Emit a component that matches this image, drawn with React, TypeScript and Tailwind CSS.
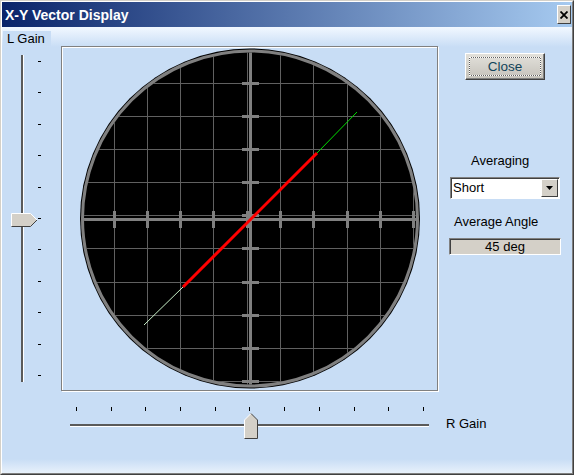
import React from "react";

function Scope() {
  const xs = [19, 52, 85, 118, 151, 185, 218, 251, 285, 318, 351];
  const ys = [2, 36, 69, 102, 135, 168, 201, 235, 268, 301, 334];
  const cx = 188;
  const cy = 171.5;
  return (
    <svg width="375" height="343" viewBox="0 0 375 343" className="block">
      <defs>
        <clipPath id="scopeClip">
          <circle cx={cx} cy={cy} r={166} />
        </clipPath>
      </defs>
      <circle cx={cx} cy={cy} r={170} fill="#000" />
      <g clipPath="url(#scopeClip)" shapeRendering="crispEdges">
        {xs.map((x) => (
          <line key={"gx" + x} x1={x + 0.5} y1={0} x2={x + 0.5} y2={343} stroke="#606060" strokeWidth={1} />
        ))}
        {ys.map((y) => (
          <line key={"gy" + y} x1={0} y1={y + 0.5} x2={375} y2={y + 0.5} stroke="#606060" strokeWidth={1} />
        ))}
        <rect x={187} y={0} width={3} height={343} fill="#808080" />
        <rect x={0} y={171} width={375} height={3} fill="#808080" />
        {ys.map((y) => (
          <rect key={"ty" + y} x={180} y={y - 1} width={17} height={3} fill="#808080" />
        ))}
        {xs.map((x) => (
          <rect key={"tx" + x} x={x - 1} y={164} width={3} height={17} fill="#808080" />
        ))}
      </g>
      <circle cx={cx} cy={cy} r={167.5} fill="none" stroke="#808080" strokeWidth={3} />
      <line x1={82} y1={278} x2={121} y2={240} stroke="#c8f0c8" strokeWidth={1} />
      <line x1={121} y1={240} x2={255} y2={106} stroke="#ff0000" strokeWidth={3} />
      <line x1={255} y1={106} x2={295} y2={65} stroke="#00e000" strokeWidth={1} />
    </svg>
  );
}

function VThumb() {
  return (
    <svg width="27" height="14" viewBox="0 0 27 14" className="block">
      <polygon points="0.5,0.5 19.5,0.5 26,7 19.5,13.5 0.5,13.5" fill="#d4d0c8" />
      <polyline points="0.5,13.5 0.5,0.5 19.5,0.5 26,7" fill="none" stroke="#ffffff" strokeWidth={1} />
      <polyline points="26,7 19.5,13.5 0.5,13.5" fill="none" stroke="#404040" strokeWidth={1} />
    </svg>
  );
}

function HThumb() {
  return (
    <svg width="14" height="26" viewBox="0 0 14 26" className="block">
      <polygon points="7,0.5 13.5,7 13.5,25.5 0.5,25.5 0.5,7" fill="#d4d0c8" />
      <polyline points="0.5,25.5 0.5,7 7,0.5" fill="none" stroke="#ffffff" strokeWidth={1} />
      <polyline points="7,0.5 13.5,7 13.5,25.5 0.5,25.5" fill="none" stroke="#404040" strokeWidth={1} />
    </svg>
  );
}

export default function App() {
  const ticks = Array.from({ length: 11 }, (_, i) => i);
  return (
    <div className="w-[574px] h-[475px] flex flex-col border border-t-[#d4d0c8] border-l-[#d4d0c8] border-r-[#404040] border-b-[#404040] font-['Liberation_Sans',Arial,sans-serif] text-black">
      <div className="flex-1 flex flex-col border border-t-white border-l-white border-r-[#808080] border-b-[#808080] min-h-0">
        {/* Title bar */}
        <div className="h-[25px] flex items-center justify-between bg-[linear-gradient(to_right,#0a246a,#a6caf0)]">
          <span className="ml-[3px] text-white font-bold text-[14px] leading-[16px]">X-Y Vector Display</span>
          <div className="mr-[1px] w-[14px] h-[19px] bg-[#d4d0c8] border border-t-white border-l-white border-r-[#404040] border-b-[#404040] flex items-center justify-center">
            <svg width="8" height="8" viewBox="0 0 8 8">
              <path d="M0.5 0.5 L7.5 7.5 M7.5 0.5 L0.5 7.5" stroke="#000" strokeWidth={1.8} />
            </svg>
          </div>
        </div>

        {/* Body */}
        <div className="flex-1 flex flex-col bg-[linear-gradient(to_bottom,#f2f8ff_0px,#c8ddf5_20px,#c8ddf5_calc(100%_-_14px),#e8f1fb_100%)] text-[13px]">
          <div className="flex items-start h-[364px]">
            {/* Left column: L Gain slider */}
            <div className="w-[59px] flex flex-col">
              <div className="mt-[4px] ml-[1px] w-[48px] h-[15px] pl-[4px] leading-[15px] bg-[#c8ddf5]">L Gain</div>
              <div className="relative h-[345px] flex">
                <div className="ml-[19px] mt-[9px] w-[3px] h-[327px] bg-[#5a5a5a] border-r border-white" />
                <div className="ml-[14px] mt-[15px] h-[315px] flex flex-col justify-between">
                  {ticks.map((i) => (
                    <div key={i} className="w-[3px] h-px bg-black" />
                  ))}
                </div>
                <div className="absolute left-[9px] top-[167px]">
                  <VThumb />
                </div>
              </div>
            </div>

            {/* Scope panel */}
            <div className="mt-[19px] w-[377px] h-[345px] border border-[#808080] shadow-[inset_1px_1px_0_#ffffff,1px_1px_0_#ffffff]">
              <Scope />
            </div>

            {/* Right column */}
            <div className="flex flex-col">
              <div className="mt-[26px] ml-[27px] w-[80px] h-[27px] border border-t-white border-l-white border-r-[#404040] border-b-[#404040] shadow-[inset_-1px_-1px_0_#808080] bg-[linear-gradient(to_bottom,#e2e0da,#c6c3bb)] p-[3px]">
                <div className="w-full h-full border border-dotted border-white bg-[#606060]">
                  <div className="w-full h-full bg-[linear-gradient(to_bottom,#dedcd6,#c9c6bf)] flex items-center justify-center text-[#12445a] text-[13.5px] leading-none">
                    Close
                  </div>
                </div>
              </div>
              <div className="mt-[73px] ml-[33px] leading-[16px]">Averaging</div>
              <div className="mt-[8px] ml-[12px] w-[110px] h-[22px] bg-white border border-t-[#808080] border-l-[#808080] border-b-white border-r-white shadow-[inset_1px_1px_0_#404040] flex items-center">
                <span className="pl-[2px] flex-1 leading-[16px]">Short</span>
                <div className="mr-[1px] w-[17px] h-[18px] bg-[#d4d0c8] border border-t-white border-l-white border-r-[#404040] border-b-[#404040] flex items-center justify-center">
                  <svg width="7" height="4" viewBox="0 0 7 4">
                    <polygon points="0,0 7,0 3.5,4" fill="#000" />
                  </svg>
                </div>
              </div>
              <div className="mt-[15px] ml-[16px] leading-[16px]">Average Angle</div>
              <div className="mt-[8px] ml-[11px] w-[112px] h-[17px] bg-[#d4d0c8] border border-t-[#808080] border-l-[#808080] border-b-white border-r-white shadow-[inset_1px_1px_0_#404040] flex items-center justify-center leading-[15px]">
                45 deg
              </div>
            </div>
          </div>

          {/* Bottom: R Gain slider */}
          <div className="flex items-start">
            <div className="relative ml-[68px] w-[359px] h-[60px] flex flex-col">
              <div className="mt-[16px] ml-[6px] w-[348px] h-[4px] flex justify-between">
                {ticks.map((i) => (
                  <div key={i} className="w-px h-[4px] bg-black" />
                ))}
              </div>
              <div className="mt-[13px] w-[359px] h-[3px] bg-[#5a5a5a] border-b border-white" />
              <div className="absolute left-[174px] top-[22px]">
                <HThumb />
              </div>
            </div>
            <div className="ml-[17px] mt-[25px] leading-[16px]">R Gain</div>
          </div>
        </div>
      </div>
    </div>
  );
}
